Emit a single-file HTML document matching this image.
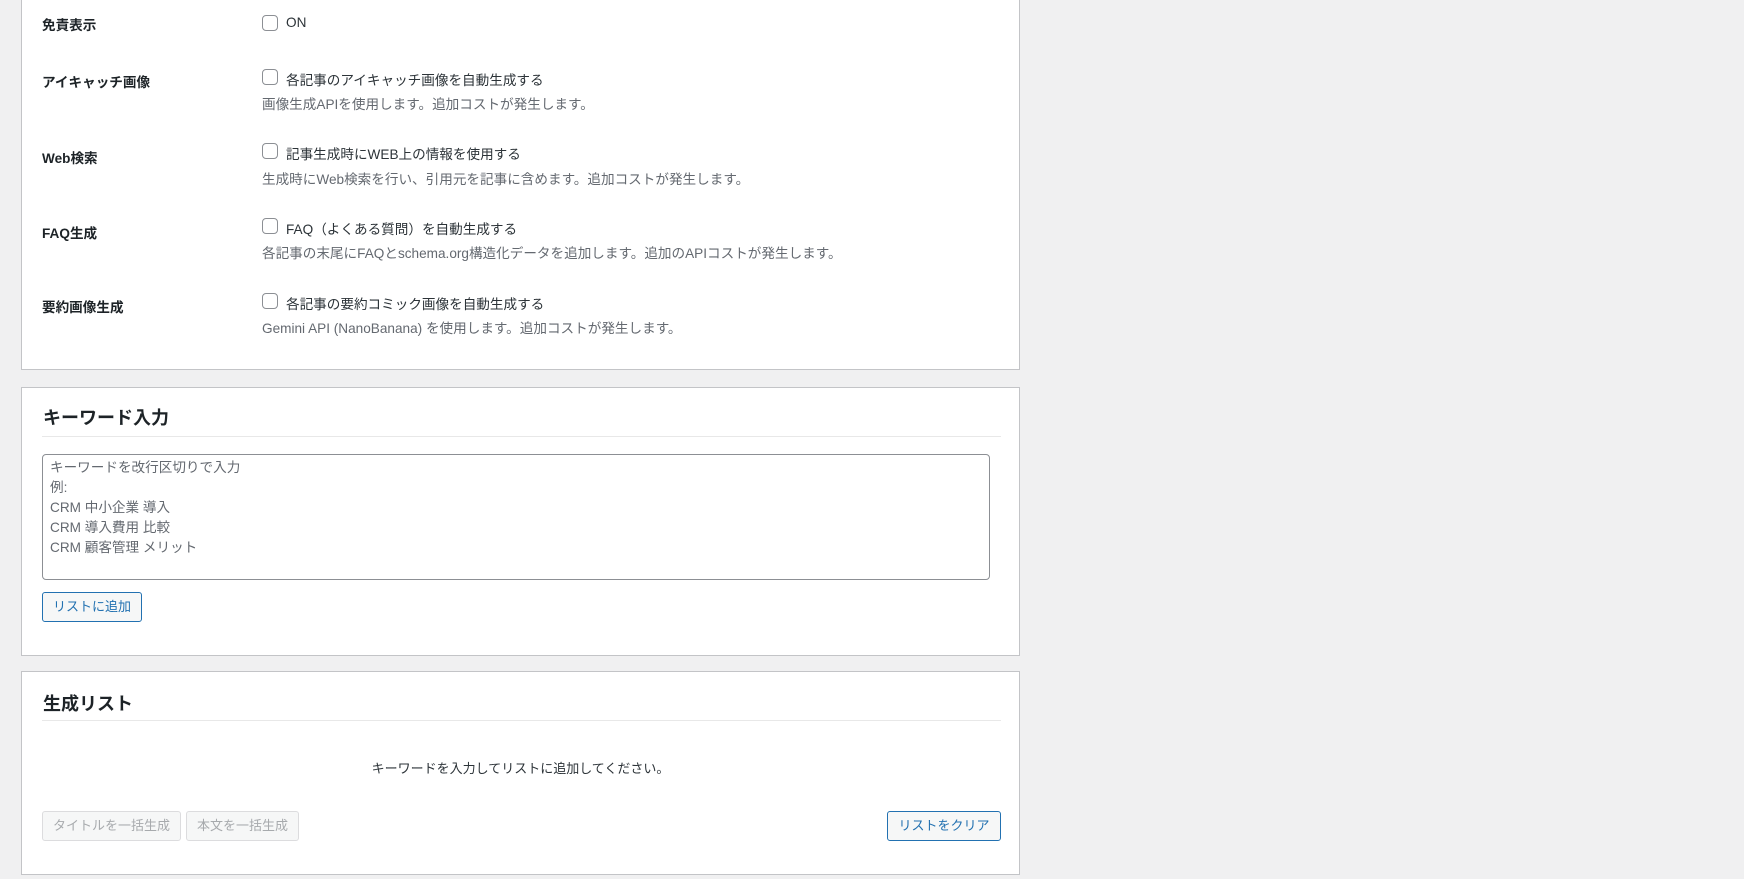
<!DOCTYPE html>
<html><head><meta charset="utf-8"><style>
*{box-sizing:border-box;margin:0;padding:0}
body{width:1744px;height:879px;overflow:hidden;background:#f0f0f1;font-family:"Liberation Sans","Noto Sans CJK JP",sans-serif;font-size:13.6px;color:#3c434a;position:relative}
.p{position:absolute;left:21px;width:999px;background:#fff;border:1px solid #c3c4c7}
.a{position:absolute;white-space:nowrap}
.lb{font-weight:bold;color:#1d2327;left:42px}
.cb{position:absolute;left:262px;width:16px;height:16px;border:1px solid #8c8f94;border-radius:4px;background:#fff}
.t{left:286px;color:#2c3338}
.d{left:262px;color:#646970}
h2{position:absolute;left:21px;font-size:18px;font-weight:bold;color:#1d2327}
.hr{position:absolute;left:20px;width:959px;height:1px;background:#f0f0f1;border-top:1px solid #e8e8e8}
.btn{position:absolute;height:30px;border:1px solid #2271b1;border-radius:3px;background:#f6f7f7;color:#2271b1;font-size:13px;line-height:28px;text-align:center}
.dis{border-color:#dcdcde;color:#a7aaad;background:#f6f7f7}
</style></head><body>
<div class="p" style="top:-2px;height:372px"></div>
<div class="a lb" style="top:14px">免責表示</div>
<div class="cb" style="top:15px"></div><div class="a t" style="top:15px">ON</div>
<div class="a lb" style="top:71px">アイキャッチ画像</div>
<div class="cb" style="top:69px"></div><div class="a t" style="top:69px">各記事のアイキャッチ画像を自動生成する</div>
<div class="a d" style="top:93px">画像生成APIを使用します。追加コストが発生します。</div>
<div class="a lb" style="top:147px">Web検索</div>
<div class="cb" style="top:143px"></div><div class="a t" style="top:143px">記事生成時にWEB上の情報を使用する</div>
<div class="a d" style="top:168px">生成時にWeb検索を行い、引用元を記事に含めます。追加コストが発生します。</div>
<div class="a lb" style="top:222px">FAQ生成</div>
<div class="cb" style="top:218px"></div><div class="a t" style="top:218px">FAQ（よくある質問）を自動生成する</div>
<div class="a d" style="top:242px">各記事の末尾にFAQとschema.org構造化データを追加します。追加のAPIコストが発生します。</div>
<div class="a lb" style="top:296px">要約画像生成</div>
<div class="cb" style="top:293px"></div><div class="a t" style="top:293px">各記事の要約コミック画像を自動生成する</div>
<div class="a d" style="top:317px">Gemini API (NanoBanana) を使用します。追加コストが発生します。</div>

<div class="p" style="top:387px;height:269px">
<h2 style="top:16px">キーワード入力</h2>
<div class="hr" style="top:48px"></div>
<div style="position:absolute;left:20px;top:66px;width:948px;height:126px;border:1px solid #8c8f94;border-radius:4px;padding:3px 7px;line-height:20px;color:#646970">キーワードを改行区切りで入力<br>例:<br>CRM 中小企業 導入<br>CRM 導入費用 比較<br>CRM 顧客管理 メリット</div>
<div class="btn" style="left:20px;top:204px;width:100px">リストに追加</div>
</div>

<div class="p" style="top:671px;height:204px">
<h2 style="top:18px">生成リスト</h2>
<div class="hr" style="top:48px"></div>
<div class="a" style="left:0;width:997px;text-align:center;top:86px;font-size:13px;color:#2c3338">キーワードを入力してリストに追加してください。</div>
<div class="btn dis" style="left:20px;top:139px;width:139px">タイトルを一括生成</div>
<div class="btn dis" style="left:164px;top:139px;width:113px">本文を一括生成</div>
<div class="btn" style="left:865px;top:139px;width:114px">リストをクリア</div>
</div>
</body></html>
